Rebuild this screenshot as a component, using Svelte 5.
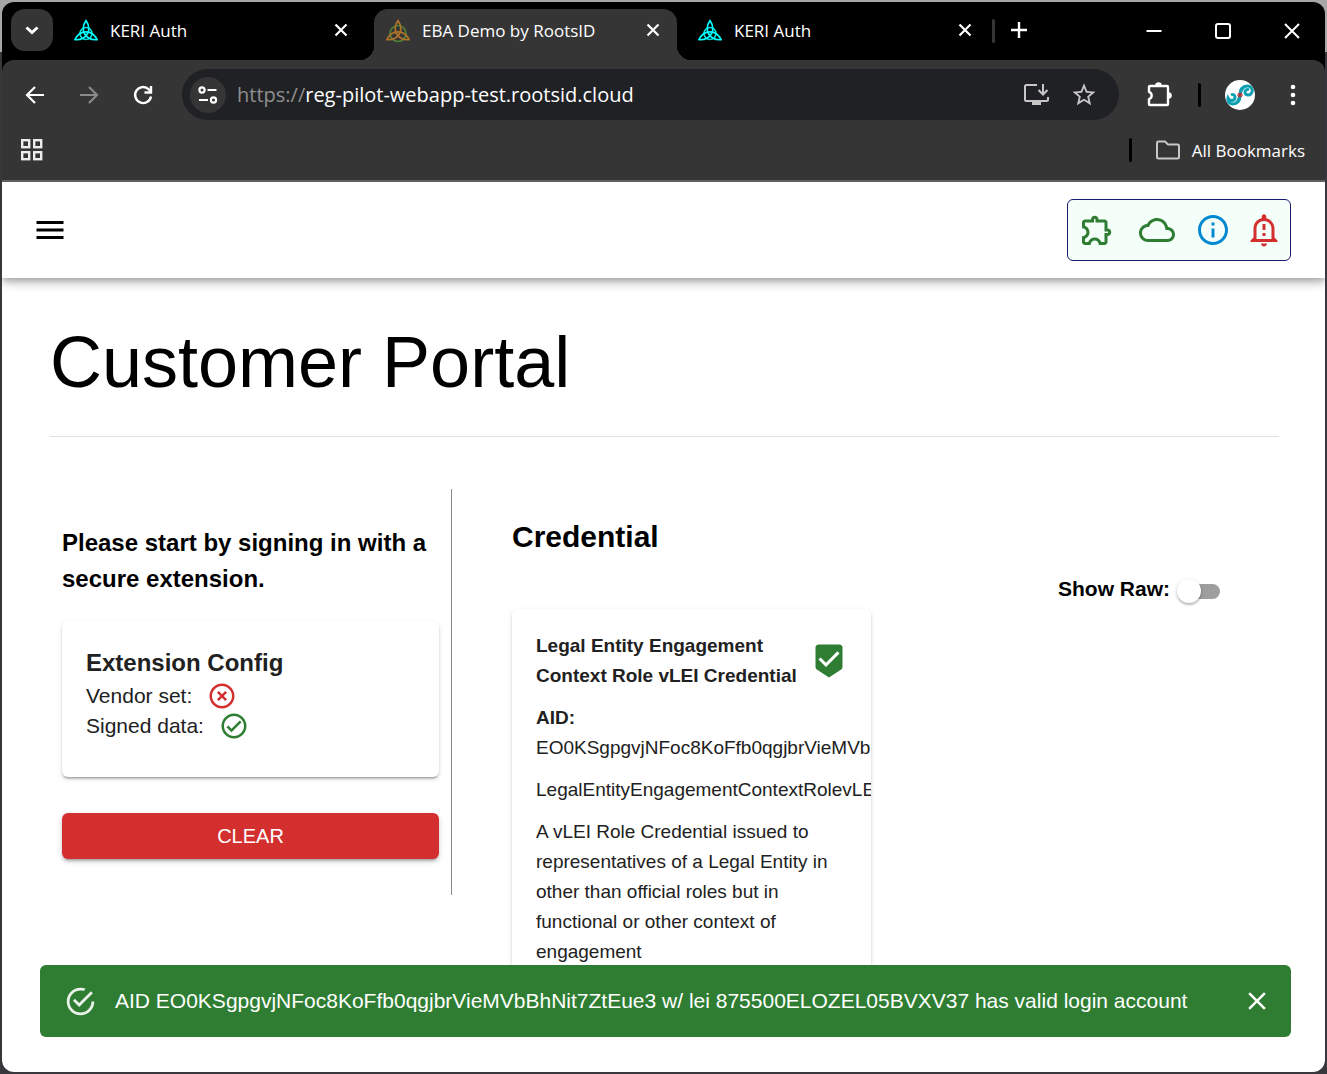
<script>
  const tabs = [
    { title: 'KERI Auth', active: false },
    { title: 'EBA Demo by RootsID', active: true },
    { title: 'KERI Auth', active: false }
  ];
  let url = $state('reg-pilot-webapp-test.rootsid.cloud');
  let showRaw = $state(false);
  let alertOpen = $state(true);
</script>

{#snippet triquetra(arcs, ring, radius)}
  <svg class="favicon" viewBox="0 0 24 24" fill="none" stroke-width="1.7" aria-hidden="true">
    <circle cx="12" cy="14.500" r={radius} stroke={ring} />
    <path d="M12 1.500C18.600 11.100 12.500 21.600 .9 20.700C5.900 10.200 18.100 10.200 23.100 20.700C11.500 21.600 5.400 11.100 12 1.500Z" stroke={arcs} stroke-linejoin="round" />
  </svg>
{/snippet}

<div class="desktop">
  <div class="window">
    <header class="tabbar">
      <button class="tab-search" aria-label="Search tabs">
        <svg width="24" height="24" viewBox="0 0 24 24" fill="none" stroke="#fff" stroke-width="3"><path d="M6.5 9.5l5.5 5 5.5-5" /></svg>
      </button>
      {#each tabs as tab}
        <div class="tab" class:active={tab.active}>
          {#if tab.active}
            {@render triquetra('#b0742a', '#4f8038', 8)}
          {:else}
            {@render triquetra('#0ff', '#0dd', 6)}
          {/if}
          <span class="tab-title">{tab.title}</span>
          <button class="icon-btn" aria-label="Close tab">
            <svg width="24" height="24" viewBox="0 0 24 24" stroke="#fff" stroke-width="2.2"><path d="M6.5 5.500l11 11M17.5 5.500l-11 11" /></svg>
          </button>
        </div>
      {/each}
      <span class="tab-divider"></span>
      <button class="icon-btn new-tab" aria-label="New tab">
        <svg width="24" height="24" viewBox="0 0 24 24" stroke="#fff" stroke-width="2.4"><path d="M12 4v16M4 12h16" /></svg>
      </button>
      <div class="window-controls">
        <button class="icon-btn" aria-label="Minimize"><svg width="24" height="24" viewBox="0 0 24 24" stroke="#fff" stroke-width="2"><path d="M4.500 12h15" /></svg></button>
        <button class="icon-btn" aria-label="Maximize"><svg width="24" height="24" viewBox="0 0 24 24" fill="none" stroke="#fff" stroke-width="2"><rect x="5" y="5" width="14" height="14" rx="2" /></svg></button>
        <button class="icon-btn" aria-label="Close window"><svg width="24" height="24" viewBox="0 0 24 24" stroke="#fff" stroke-width="2"><path d="M5 5l14 14M19 5L5 19" /></svg></button>
      </div>
    </header>

    <div class="chrome">
      <div class="toolbar">
        <nav class="nav-buttons" aria-label="Browser navigation">
          <button class="icon-btn" aria-label="Back"><svg width="24" height="24" viewBox="0 0 24 24" fill="none" stroke="#fff" stroke-width="2.2"><path d="M21 12H4.500M12 4l-8 8 8 8" /></svg></button>
          <button class="icon-btn" aria-label="Forward"><svg width="24" height="24" viewBox="0 0 24 24" fill="none" stroke="#8a8a8a" stroke-width="2.200"><path d="M3 12h16.500M12 4l8 8-8 8" /></svg></button>
          <button class="icon-btn" aria-label="Reload"><svg width="24" height="24" viewBox="0 0 24 24" fill="none" stroke="#fff" stroke-width="2.400"><path d="M20 13.500a8 8 0 1 1-2.300-7.200L20 8.500" /><path d="M20 3v6.500h-6.500" /></svg></button>
        </nav>
        <div class="address">
          <button class="site-info" aria-label="View site information">
            <svg width="24" height="24" viewBox="0 0 24 24" fill="none" stroke="#fff" stroke-width="2.200"><circle cx="6" cy="7" r="2.600" /><path d="M11.500 7h9M3 17h9" /><circle cx="17.500" cy="17" r="2.600" /></svg>
          </button>
          <label class="scheme" for="url">https://</label>
          <input id="url" class="url" type="text" bind:value={url} spellcheck="false" />
          <button class="icon-btn" aria-label="Install app">
            <svg width="26" height="24" viewBox="0 0 26 24" fill="none" stroke="#c7c7c7" stroke-width="2"><path d="M14 2H3.500Q2 2 2 3.500v13Q2 18 3.500 18h20q1.500 0 1.500-1.500V14M20 1v10M15.500 7l4.500 4.500L24.500 7" /><path d="M9 20h9" stroke-width="4" /></svg>
          </button>
          <button class="icon-btn" aria-label="Bookmark this page">
            <svg width="24" height="24" viewBox="0 0 24 24" fill="#c7c7c7"><path d="M22 9.240l-7.190-.62L12 2 9.190 8.630 2 9.240l5.460 4.730L5.820 21 12 17.270 18.180 21l-1.630-7.030L22 9.240zM12 15.400l-3.760 2.270 1-4.280-3.320-2.880 4.380-.38L12 6.100l1.710 4.040 4.380.38-3.320 2.880 1 4.280L12 15.400z" transform="translate(-1.800 -2) scale(1.150)" /></svg>
          </button>
        </div>
        <button class="icon-btn extensions" aria-label="Extensions">
          <svg width="26" height="26" viewBox="0 0 26 26"><path d="M3 5Q3 4 4 4h17q1 0 1 1v17q0 1-1 1H4q-1 0-1-1v-4.800a3.900 3.900 0 0 0 0-7.400z" fill="none" stroke="#fff" stroke-width="2.400" stroke-linejoin="round" /><path d="M9.200 3.500a3.300 3.300 0 0 1 6.600 0zM22.500 10.200a3.300 3.300 0 0 1 0 6.600z" fill="#fff" /></svg>
        </button>
        <span class="bar-divider"></span>
        <button class="avatar" aria-label="Profile">
          <svg width="30" height="30" viewBox="0 0 30 30"><circle cx="15" cy="15" r="15" fill="#fff" /><g fill="none" stroke="#0c9fb0" stroke-width="3"><path d="M15 15c-1 5-3 9-7 9s-6-3-5-6c2 4 7 3 7-1 0-2-2-3-4-2" /><path d="M15 15c1-5 3-9 7-9s6 3 5 6c-2 5-7 3-7 0 0-2 2-3 4-2" /><path d="M15 15c-1-6 2-9 6-9M15 15c1 6-2 9-6 9" stroke-width="2" /></g><path d="M15 12.500v5M12 15h6M13 13l4 4M17 13l-4 4" stroke="#c8202a" stroke-width="1" /></svg>
        </button>
        <button class="icon-btn" aria-label="Menu">
          <svg width="24" height="24" viewBox="0 0 24 24" fill="#fff"><circle cx="12" cy="4" r="2.300" /><circle cx="12" cy="12" r="2.300" /><circle cx="12" cy="20" r="2.300" /></svg>
        </button>
      </div>
      <div class="bookmarks">
        <button class="icon-btn" aria-label="Apps">
          <svg width="24" height="24" viewBox="0 0 24 24" fill="none" stroke="#ececec" stroke-width="2.400"><rect x="2.200" y="2.200" width="7" height="7" /><rect x="14.200" y="2.200" width="7" height="7" /><rect x="2.200" y="14.200" width="7" height="7" /><rect x="14.200" y="14.200" width="7" height="7" /></svg>
        </button>
        <span class="bar-divider"></span>
        <button class="all-bookmarks">
          <svg width="24" height="24" viewBox="0 0 24 24" fill="none" stroke="#c7c7c7" stroke-width="2"><path d="M1 5q0-1.500 1.500-1.500H9L12 6.500h9.500Q23 6.500 23 8v11q0 1.500-1.500 1.500h-19Q1 20.500 1 19z" /></svg>
          All Bookmarks
        </button>
      </div>
    </div>

    <div class="page">
      <div class="appbar">
        <button class="icon-btn" aria-label="Open menu">
          <svg width="36" height="36" viewBox="0 0 24 24"><path d="M3 18h18v-2H3v2zm0-5h18v-2H3v2zm0-7v2h18V6H3z" /></svg>
        </button>
        <div class="status">
          <button class="icon-btn green" aria-label="Extension">
            <svg width="36" height="36" viewBox="0 0 24 24"><path d="M10.500 4.500c.28 0 .5.22.5.5v2h6v6h2c.28 0 .5.22.5.5s-.22.5-.5.5h-2v6h-2.120c-.68-1.750-2.390-3-4.380-3s-3.700 1.250-4.380 3H4v-2.120c1.750-.68 3-2.390 3-4.380 0-1.990-1.240-3.700-2.990-4.380L4 7h6V5c0-.28.22-.5.5-.5m0-2C9.120 2.500 8 3.620 8 5H4c-1.100 0-1.990.9-1.990 2v3.800h.29c1.490 0 2.700 1.210 2.700 2.700s-1.210 2.700-2.700 2.700H2V20c0 1.100.9 2 2 2h3.800v-.3c0-1.490 1.210-2.700 2.700-2.700s2.700 1.210 2.700 2.700v.3H17c1.100 0 2-.9 2-2v-4c1.380 0 2.500-1.120 2.500-2.500S20.380 11 19 11V7c0-1.100-.9-2-2-2h-4c0-1.380-1.120-2.500-2.500-2.500z" /></svg>
          </button>
          <button class="icon-btn green" aria-label="Cloud">
            <svg width="36" height="36" viewBox="0 0 24 24"><path d="M19.350 10.040C18.670 6.590 15.640 4 12 4 9.110 4 6.600 5.640 5.350 8.040 2.340 8.360 0 10.910 0 14c0 3.310 2.690 6 6 6h13c2.760 0 5-2.240 5-5 0-2.640-2.050-4.780-4.650-4.960zM19 18H6c-2.210 0-4-1.790-4-4 0-2.050 1.530-3.760 3.560-3.970l1.070-.11.5-.95C8.080 7.140 9.940 6 12 6c2.620 0 4.880 1.860 5.390 4.430l.3 1.500 1.530.11c1.560.1 2.780 1.410 2.780 2.960 0 1.650-1.350 3-3 3z" /></svg>
          </button>
          <button class="icon-btn blue" aria-label="Information">
            <svg width="36" height="36" viewBox="0 0 24 24"><path d="M11 7h2v2h-2zm0 4h2v6h-2zm1-9C6.480 2 2 6.480 2 12s4.480 10 10 10 10-4.480 10-10S17.520 2 12 2zm0 18c-4.410 0-8-3.590-8-8s3.590-8 8-8 8 3.590 8 8-3.590 8-8 8z" /></svg>
          </button>
          <button class="icon-btn red" aria-label="Important notifications">
            <svg width="36" height="36" viewBox="0 0 24 24"><path d="M12 23c1.100 0 1.990-.89 1.990-1.990h-3.980c0 1.100.89 1.990 1.990 1.990zm7-6v-6c0-3.350-2.360-6.150-5.500-6.830V3c0-.83-.67-1.500-1.500-1.500s-1.500.67-1.500 1.500v1.170C7.360 4.850 5 7.650 5 11v6l-2 2v1h18v-1l-2-2zm-2 1H7v-7c0-2.760 2.240-5 5-5s5 2.240 5 5v7zm-6-10h2v4h-2zm0 6h2v2h-2z" /></svg>
          </button>
        </div>
      </div>

      <main>
        <h1>Customer Portal</h1>
        <div class="columns">
          <section class="signin">
            <h2>Please start by signing in with a secure extension.</h2>
            <div class="card config">
              <h3>Extension Config</h3>
              <div class="check-row">
                Vendor set:
                <svg class="red" width="30" height="30" viewBox="0 0 24 24"><path d="M14.590 8L12 10.590 9.410 8 8 9.410 10.590 12 8 14.590 9.410 16 12 13.410 14.590 16 16 14.590 13.410 12 16 9.410 14.590 8zM12 2C6.470 2 2 6.470 2 12s4.470 10 10 10 10-4.470 10-10S17.530 2 12 2zm0 18c-4.410 0-8-3.590-8-8s3.590-8 8-8 8 3.590 8 8-3.590 8-8 8z" /></svg>
              </div>
              <div class="check-row">
                Signed data:
                <svg class="green" width="30" height="30" viewBox="0 0 24 24"><path d="M12 2C6.480 2 2 6.480 2 12s4.480 10 10 10 10-4.480 10-10S17.520 2 12 2zm0 18c-4.410 0-8-3.590-8-8s3.590-8 8-8 8 3.590 8 8-3.590 8-8 8zm4.590-12.420L10 14.170l-2.590-2.580L6 13l4 4 8-8z" /></svg>
              </div>
            </div>
            <button class="clear">CLEAR</button>
          </section>

          <section class="credential">
            <h2>Credential</h2>
            <label class="raw">
              Show Raw:
              <input type="checkbox" role="switch" bind:checked={showRaw} />
            </label>
            <article class="card vlei">
              <div class="vlei-head">
                <h3>Legal Entity Engagement Context Role vLEI Credential</h3>
                <svg class="green" width="36" height="36" viewBox="0 0 24 24"><path d="M19 1H5c-1.100 0-1.990.9-1.990 2L3 15.930c0 .69.350 1.300.88 1.660L12 23l8.110-5.410c.53-.36.88-.97.88-1.660L21 3c0-1.100-.9-2-2-2zm-9 15l-5-5 1.410-1.410L10 13.170l7.590-7.590L19 7l-9 9z" /></svg>
              </div>
              <p><strong>AID:</strong> EO0KSgpgvjNFoc8KoFfb0qgjbrVieMVbBhNit7ZtEue3</p>
              <p>LegalEntityEngagementContextRolevLEICredential</p>
              <p>A vLEI Role Credential issued to representatives of a Legal Entity in other than official roles but in functional or other context of engagement</p>
            </article>
          </section>
        </div>
      </main>
    </div>

    {#if alertOpen}
      <div class="alert" role="alert">
        <svg class="alert-icon" width="33" height="33" viewBox="0 0 24 24"><path d="M20 12A8 8 0 0 1 12 20A8 8 0 0 1 4 12A8 8 0 0 1 12 4C12.760 4 13.500 4.110 14.200 4.310L15.770 2.740C14.610 2.260 13.340 2 12 2A10 10 0 0 0 2 12A10 10 0 0 0 12 22A10 10 0 0 0 22 12M7.910 10.080L6.500 11.500L11 16L21 6L19.590 4.580L11 13.170L7.910 10.080Z" /></svg>
        <span class="alert-text">AID EO0KSgpgvjNFoc8KoFfb0qgjbrVieMVbBhNit7ZtEue3 w/ lei 875500ELOZEL05BVXV37 has valid login account</span>
        <button class="icon-btn" aria-label="Close" onclick={() => (alertOpen = false)}>
          <svg width="30" height="30" viewBox="0 0 24 24" fill="#fff"><path d="M19 6.410L17.590 5 12 10.590 6.410 5 5 6.410 10.590 12 5 17.590 6.410 19 12 13.410 17.590 19 19 17.590 13.410 12z" /></svg>
        </button>
      </div>
    {/if}
  </div>
</div>

<style>
  :global(body) {
    margin: 0;
  }
  .desktop {
    box-sizing: border-box;
    height: 100vh;
    padding: 2px;
    background: linear-gradient(#a6a6a6 52px, #37373c 52px);
    font-family: 'Liberation Sans', Arial, sans-serif;
  }
  .desktop * {
    box-sizing: border-box;
  }
  .window {
    position: relative;
    display: flex;
    flex-direction: column;
    height: 100%;
    border-radius: 12px;
    overflow: hidden;
    background: #000;
  }
  button {
    margin: 0;
    padding: 0;
    border: 0;
    background: none;
    font: inherit;
    color: inherit;
    cursor: pointer;
  }
  svg {
    display: block;
    flex: none;
  }
  h1,
  h2,
  h3,
  p {
    margin: 0;
  }
  .icon-btn {
    display: grid;
    place-items: center;
    flex: none;
  }
  .tabbar,
  .chrome {
    font-family: 'Segoe UI', 'Open Sans', 'Noto Sans', sans-serif;
    color: #fff;
  }
  .tabbar {
    display: flex;
    gap: 9px;
    height: 58px;
    padding: 7px 21px 0 9px;
    font-size: 17px;
  }
  .tab-search {
    display: grid;
    place-items: center;
    flex: none;
    width: 42px;
    height: 42px;
    border-radius: 14px;
    background: #353535;
  }
  .tab {
    position: relative;
    display: flex;
    align-items: center;
    gap: 12px;
    flex: 0 1 303px;
    min-width: 0;
    padding: 0 12px 8px;
    border-radius: 14px 14px 0 0;
  }
  .tab.active {
    background: #353535;
  }
  .tab.active::before,
  .tab.active::after {
    content: '';
    position: absolute;
    bottom: 0;
    width: 14px;
    height: 14px;
  }
  .tab.active::before {
    right: 100%;
    background: radial-gradient(circle at 0 0, transparent 14px, #353535 14px);
  }
  .tab.active::after {
    left: 100%;
    background: radial-gradient(circle at 100% 0, transparent 14px, #353535 14px);
  }
  .favicon {
    width: 24px;
    height: 24px;
  }
  .tab-title {
    flex: 1;
    overflow: hidden;
    white-space: nowrap;
  }
  .tab-divider {
    flex: none;
    width: 3px;
    height: 24px;
    margin: 10px 0 0 -6px;
    border-radius: 2px;
    background: #353535;
  }
  .new-tab {
    height: 42px;
    margin-left: 3px;
  }
  .window-controls {
    display: flex;
    gap: 45px;
    height: 44px;
    margin-left: auto;
  }
  .chrome {
    border-bottom: 2px solid #606060;
    border-radius: 12px 12px 0 0;
    background: #353535;
  }
  .toolbar {
    display: flex;
    align-items: center;
    padding: 9px 20px 0 21px;
  }
  .nav-buttons {
    display: flex;
    gap: 30px;
  }
  .address {
    display: flex;
    align-items: center;
    flex: 1;
    min-width: 0;
    height: 51px;
    margin-left: 27px;
    padding: 0 23px 0 8px;
    border-radius: 26px;
    background: #202124;
    font-size: 20px;
  }
  .site-info {
    display: grid;
    place-items: center;
    flex: none;
    width: 36px;
    height: 36px;
    margin-right: 11px;
    border-radius: 50%;
    background: #353535;
  }
  .scheme {
    color: #8f8f8f;
  }
  .url {
    flex: 1;
    min-width: 0;
    padding: 0;
    border: 0;
    outline: 0;
    background: none;
    font: inherit;
    color: #fff;
  }
  .address .icon-btn + .icon-btn {
    margin-left: 23px;
  }
  .extensions {
    margin: 0 26px 0 27px;
  }
  .bar-divider {
    flex: none;
    width: 3px;
    height: 24px;
    border-radius: 2px;
    background: #000;
  }
  .avatar {
    flex: none;
    margin: 0 26px 0 24px;
  }
  .bookmarks {
    display: flex;
    align-items: center;
    height: 60px;
    padding: 0 20px 0 18px;
    font-size: 17px;
  }
  .bookmarks .bar-divider {
    margin-left: auto;
  }
  .all-bookmarks {
    display: flex;
    align-items: center;
    gap: 12px;
    margin-left: 24px;
  }
  .page {
    flex: 1;
    min-height: 0;
    overflow: hidden;
    background: #fff;
    color: #000;
  }
  .appbar {
    display: flex;
    align-items: center;
    justify-content: space-between;
    height: 96px;
    padding: 0 34px 0 30px;
    background: #fff;
    box-shadow:
      0 3px 6px -1px rgba(0, 0, 0, 0.2),
      0 6px 8px 0 rgba(0, 0, 0, 0.14),
      0 1px 15px 0 rgba(0, 0, 0, 0.12);
  }
  .status {
    display: grid;
    grid-template-columns: 60px 56px 51px 36px;
    justify-items: start;
    padding: 12px 8px 12px 11px;
    border: 1px solid #191970;
    border-radius: 6px;
    background: #f5fffa;
  }
  .green {
    fill: #2e7d32;
  }
  .blue {
    fill: #0288d1;
  }
  .red {
    fill: #d32f2f;
  }
  main {
    padding: 42px 46px 0 48px;
  }
  h1 {
    padding-bottom: 32px;
    border-bottom: 1px solid #e0e0e0;
    font-size: 72px;
    font-weight: 400;
    line-height: 84px;
  }
  .columns {
    display: grid;
    grid-template-columns: 1fr 2fr;
    align-items: start;
    margin: 52px 23px 0 0;
  }
  .signin {
    padding: 36px 12px;
    border-right: 1px solid #888;
  }
  .signin h2 {
    font-size: 24px;
    line-height: 36px;
  }
  .card {
    padding: 24px;
    border-radius: 6px;
    background: #fff;
    color: #212121;
    box-shadow:
      0 3px 2px -2px rgba(0, 0, 0, 0.2),
      0 2px 2px 0 rgba(0, 0, 0, 0.14),
      0 2px 5px 0 rgba(0, 0, 0, 0.12);
  }
  .config {
    margin: 24px 0 36px;
    padding-bottom: 36px;
  }
  .config h3 {
    font-size: 24px;
    line-height: 36px;
  }
  .check-row {
    display: flex;
    align-items: center;
    gap: 15px;
    font-size: 21px;
    line-height: 30px;
  }
  .clear {
    display: block;
    width: 100%;
    height: 46px;
    border-radius: 6px;
    background: #d32f2f;
    color: #fff;
    font-size: 20px;
    box-shadow:
      0 4px 2px -3px rgba(0, 0, 0, 0.2),
      0 3px 3px 0 rgba(0, 0, 0, 0.14),
      0 2px 7px 0 rgba(0, 0, 0, 0.12);
  }
  .credential {
    padding: 25px 36px 0 60px;
  }
  .credential h2 {
    font-size: 30px;
    line-height: 45px;
  }
  .raw {
    display: flex;
    align-items: center;
    justify-content: flex-end;
    gap: 7px;
    margin: 15px 0 5px;
    font-size: 21px;
    font-weight: 700;
    line-height: 30px;
  }
  .raw input {
    appearance: none;
    display: grid;
    align-items: center;
    width: 43px;
    height: 24px;
    margin: 4px 0 0;
    cursor: pointer;
  }
  .raw input::before,
  .raw input::after {
    content: '';
    grid-area: 1 / 1;
  }
  .raw input::before {
    height: 15px;
    margin-left: 6px;
    border-radius: 8px;
    background: #9e9e9e;
  }
  .raw input::after {
    width: 24px;
    height: 24px;
    border-radius: 50%;
    background: #fff;
    box-shadow:
      0 2px 2px rgba(0, 0, 0, 0.2),
      0 1px 4px rgba(0, 0, 0, 0.14);
  }
  .raw input:checked::after {
    justify-self: end;
    background: #1976d2;
  }
  .vlei {
    max-width: 359px;
    padding-top: 22px;
    overflow: hidden;
    font-size: 19px;
    line-height: 30px;
  }
  .vlei-head {
    display: flex;
    align-items: center;
    justify-content: space-between;
  }
  .vlei h3 {
    font-size: 19px;
  }
  .vlei p {
    margin-top: 12px;
  }
  .vlei strong {
    display: block;
  }
  .alert {
    position: absolute;
    right: 34px;
    bottom: 35px;
    left: 38px;
    display: flex;
    align-items: center;
    min-height: 72px;
    padding: 0 19px 0 24px;
    border-radius: 6px;
    background: #2e7d32;
    color: #fff;
  }
  .alert-icon {
    margin-right: 18px;
    fill: #fff;
    opacity: 0.9;
  }
  .alert-text {
    flex: 1;
    font-size: 21px;
    line-height: 30px;
  }
</style>
